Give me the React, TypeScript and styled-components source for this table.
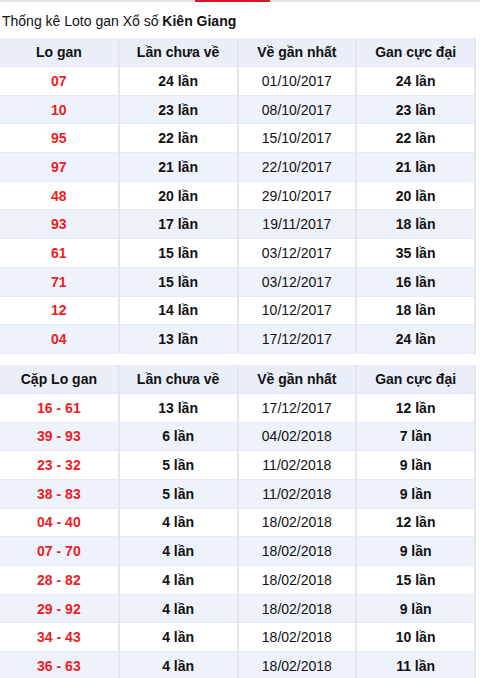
import React from "react";
import styled, { createGlobalStyle } from "styled-components";

const GlobalStyle = createGlobalStyle`
  body {
    margin: 0;
    background: #fff;
    font-family: "Liberation Sans", Arial, sans-serif;
    color: #111;
  }
`;

type Row = { lo: string; chua: string; gan: string; max: string };

const singles: Row[] = [
  { lo: "07", chua: "24 lần", gan: "01/10/2017", max: "24 lần" },
  { lo: "10", chua: "23 lần", gan: "08/10/2017", max: "23 lần" },
  { lo: "95", chua: "22 lần", gan: "15/10/2017", max: "22 lần" },
  { lo: "97", chua: "21 lần", gan: "22/10/2017", max: "21 lần" },
  { lo: "48", chua: "20 lần", gan: "29/10/2017", max: "20 lần" },
  { lo: "93", chua: "17 lần", gan: "19/11/2017", max: "18 lần" },
  { lo: "61", chua: "15 lần", gan: "03/12/2017", max: "35 lần" },
  { lo: "71", chua: "15 lần", gan: "03/12/2017", max: "16 lần" },
  { lo: "12", chua: "14 lần", gan: "10/12/2017", max: "18 lần" },
  { lo: "04", chua: "13 lần", gan: "17/12/2017", max: "24 lần" },
];

const pairs: Row[] = [
  { lo: "16 - 61", chua: "13 lần", gan: "17/12/2017", max: "12 lần" },
  { lo: "39 - 93", chua: "6 lần", gan: "04/02/2018", max: "7 lần" },
  { lo: "23 - 32", chua: "5 lần", gan: "11/02/2018", max: "9 lần" },
  { lo: "38 - 83", chua: "5 lần", gan: "11/02/2018", max: "9 lần" },
  { lo: "04 - 40", chua: "4 lần", gan: "18/02/2018", max: "12 lần" },
  { lo: "07 - 70", chua: "4 lần", gan: "18/02/2018", max: "9 lần" },
  { lo: "28 - 82", chua: "4 lần", gan: "18/02/2018", max: "15 lần" },
  { lo: "29 - 92", chua: "4 lần", gan: "18/02/2018", max: "9 lần" },
  { lo: "34 - 43", chua: "4 lần", gan: "18/02/2018", max: "10 lần" },
  { lo: "36 - 63", chua: "4 lần", gan: "18/02/2018", max: "11 lần" },
];

const GanTable = ({ first, rows }: { first: string; rows: Row[] }) => (
  <Table>
    <thead>
      <tr>
        <Th>{first}</Th>
        <Th>Lần chưa về</Th>
        <Th>Về gần nhất</Th>
        <Th>Gan cực đại</Th>
      </tr>
    </thead>
    <tbody>
      {rows.map((r, i) => (
        <Tr key={i} $alt={i % 2 === 1}>
          <Td $red $bold>{r.lo}</Td>
          <Td $bold>{r.chua}</Td>
          <Td>{r.gan}</Td>
          <Td $bold>{r.max}</Td>
        </Tr>
      ))}
    </tbody>
  </Table>
);

const App = () => (
  <Page>
    <GlobalStyle />
    <TopBar>
      <TopMark />
    </TopBar>
    <Title>
      Thống kê Loto gan Xổ số <b>Kiên Giang</b>
    </Title>
    <GanTable first="Lo gan" rows={singles} />
    <Spacer />
    <GanTable first="Cặp Lo gan" rows={pairs} />
  </Page>
);

export default App;

const Page = styled.div`
  width: 480px;
`;

const TopBar = styled.div`
  height: 2px;
  background: #e2e2e2;
  position: relative;
`;

const TopMark = styled.div`
  position: absolute;
  left: 195px;
  top: 0;
  width: 75px;
  height: 2px;
  background: #d9161f;
`;

const Title = styled.h1`
  margin: 0;
  padding: 11px 0 0 2px;
  height: 25px;
  font-size: 14px;
  font-weight: normal;
  line-height: 16px;
  color: #111;

  b {
    font-weight: bold;
  }
`;

const Table = styled.table`
  width: 476px;
  border-collapse: collapse;
  table-layout: fixed;
  border-right: 2px solid #e3e6ec;
`;

const Th = styled.th`
  height: 28px;
  padding: 0;
  background: #e9eef9;
  border-left: 2px solid #e3e6ec;
  border-bottom: 1px solid #e3e8f2;
  font-size: 14px;
  font-weight: bold;
  text-align: center;
  color: #111;

  &:first-child {
    border-left: none;
  }
`;

const Tr = styled.tr<{ $alt?: boolean }>`
  background: ${(p) => (p.$alt ? "#eef2fa" : "#fff")};
`;

const Td = styled.td<{ $red?: boolean; $bold?: boolean }>`
  height: 27.7px;
  padding: 0;
  border-left: 2px solid #e3e6ec;
  border-bottom: 1px solid #e6eaf2;
  font-size: 14px;
  font-weight: ${(p) => (p.$bold ? "bold" : "normal")};
  color: ${(p) => (p.$red ? "#ee1c25" : "#111")};
  text-align: center;

  &:first-child {
    border-left: none;
  }
`;

const Spacer = styled.div`
  height: 11px;
`;
